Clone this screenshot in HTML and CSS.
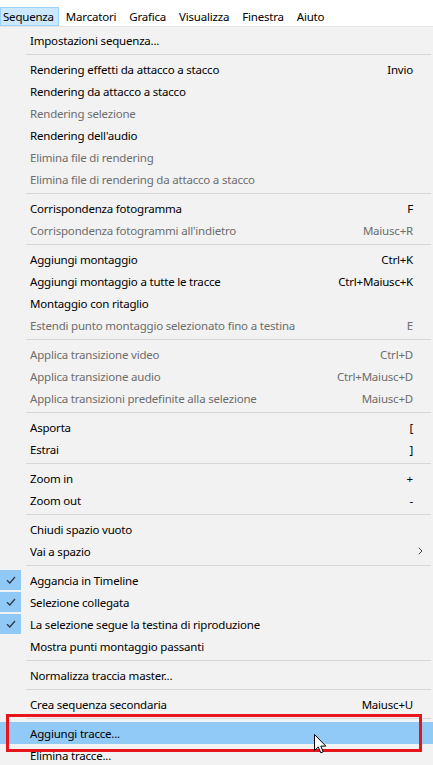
FILE: index.html
```html
<!DOCTYPE html>
<html lang="it">
<head>
<meta charset="utf-8">
<title>Menu Sequenza</title>
<link rel="stylesheet" href="styles.css">
</head>
<body>
<div class="titlebar"></div>
<nav class="menubar">
  <span class="mb-item active">Sequenza</span>
  <span class="mb-item">Marcatori</span>
  <span class="mb-item">Grafica</span>
  <span class="mb-item">Visualizza</span>
  <span class="mb-item">Finestra</span>
  <span class="mb-item">Aiuto</span>
</nav>
<div class="dropdown">
  <div class="item"><span class="gut"></span><span class="label">Impostazioni sequenza...</span><span class="key"></span><span class="sub"></span></div>
  <div class="sep"></div>
  <div class="item"><span class="gut"></span><span class="label">Rendering effetti da attacco a stacco</span><span class="key">Invio</span><span class="sub"></span></div>
  <div class="item"><span class="gut"></span><span class="label">Rendering da attacco a stacco</span><span class="key"></span><span class="sub"></span></div>
  <div class="item dis"><span class="gut"></span><span class="label">Rendering selezione</span><span class="key"></span><span class="sub"></span></div>
  <div class="item"><span class="gut"></span><span class="label">Rendering dell'audio</span><span class="key"></span><span class="sub"></span></div>
  <div class="item dis"><span class="gut"></span><span class="label">Elimina file di rendering</span><span class="key"></span><span class="sub"></span></div>
  <div class="item dis"><span class="gut"></span><span class="label">Elimina file di rendering da attacco a stacco</span><span class="key"></span><span class="sub"></span></div>
  <div class="sep"></div>
  <div class="item"><span class="gut"></span><span class="label">Corrispondenza fotogramma</span><span class="key">F</span><span class="sub"></span></div>
  <div class="item dis"><span class="gut"></span><span class="label">Corrispondenza fotogrammi all'indietro</span><span class="key">Maiusc+R</span><span class="sub"></span></div>
  <div class="sep"></div>
  <div class="item"><span class="gut"></span><span class="label">Aggiungi montaggio</span><span class="key">Ctrl+K</span><span class="sub"></span></div>
  <div class="item"><span class="gut"></span><span class="label">Aggiungi montaggio a tutte le tracce</span><span class="key">Ctrl+Maiusc+K</span><span class="sub"></span></div>
  <div class="item"><span class="gut"></span><span class="label">Montaggio con ritaglio</span><span class="key"></span><span class="sub"></span></div>
  <div class="item dis"><span class="gut"></span><span class="label">Estendi punto montaggio selezionato fino a testina</span><span class="key">E</span><span class="sub"></span></div>
  <div class="sep"></div>
  <div class="item dis"><span class="gut"></span><span class="label">Applica transizione video</span><span class="key">Ctrl+D</span><span class="sub"></span></div>
  <div class="item dis"><span class="gut"></span><span class="label">Applica transizione audio</span><span class="key">Ctrl+Maiusc+D</span><span class="sub"></span></div>
  <div class="item dis"><span class="gut"></span><span class="label">Applica transizioni predefinite alla selezione</span><span class="key">Maiusc+D</span><span class="sub"></span></div>
  <div class="sep"></div>
  <div class="item"><span class="gut"></span><span class="label">Asporta</span><span class="key">[</span><span class="sub"></span></div>
  <div class="item"><span class="gut"></span><span class="label">Estrai</span><span class="key">]</span><span class="sub"></span></div>
  <div class="sep"></div>
  <div class="item"><span class="gut"></span><span class="label">Zoom in</span><span class="key">+</span><span class="sub"></span></div>
  <div class="item"><span class="gut"></span><span class="label">Zoom out</span><span class="key">-</span><span class="sub"></span></div>
  <div class="sep"></div>
  <div class="item"><span class="gut"></span><span class="label">Chiudi spazio vuoto</span><span class="key"></span><span class="sub"></span></div>
  <div class="item"><span class="gut"></span><span class="label">Vai a spazio</span><span class="key"></span><span class="sub"><svg width="5" height="8" viewBox="0 0 5 8"><path d="M0.8 0.8 L4 4 L0.8 7.2" fill="none" stroke="#444" stroke-width="1"/></svg></span></div>
  <div class="sep"></div>
  <div class="item"><span class="gut checked"><svg class="check" width="10" height="8" viewBox="0 0 10 8"><path d="M1 4.2 L3.8 7 L9 1" fill="none" stroke="#2b3a4a" stroke-width="1.3"/></svg></span><span class="label">Aggancia in Timeline</span><span class="key"></span><span class="sub"></span></div>
  <div class="item"><span class="gut checked"><svg class="check" width="10" height="8" viewBox="0 0 10 8"><path d="M1 4.2 L3.8 7 L9 1" fill="none" stroke="#2b3a4a" stroke-width="1.3"/></svg></span><span class="label">Selezione collegata</span><span class="key"></span><span class="sub"></span></div>
  <div class="item"><span class="gut checked"><svg class="check" width="10" height="8" viewBox="0 0 10 8"><path d="M1 4.2 L3.8 7 L9 1" fill="none" stroke="#2b3a4a" stroke-width="1.3"/></svg></span><span class="label">La selezione segue la testina di riproduzione</span><span class="key"></span><span class="sub"></span></div>
  <div class="item"><span class="gut"></span><span class="label">Mostra punti montaggio passanti</span><span class="key"></span><span class="sub"></span></div>
  <div class="sep"></div>
  <div class="item"><span class="gut"></span><span class="label">Normalizza traccia master...</span><span class="key"></span><span class="sub"></span></div>
  <div class="sep"></div>
  <div class="item"><span class="gut"></span><span class="label">Crea sequenza secondaria</span><span class="key">Maiusc+U</span><span class="sub"></span></div>
  <div class="sep"></div>
  <div class="item hover"><span class="gut"></span><span class="label">Aggiungi tracce...</span><span class="key"></span><span class="sub"></span></div>
  <div class="item"><span class="gut"></span><span class="label">Elimina tracce...</span><span class="key"></span><span class="sub"></span></div>
</div>
<div class="annotation"></div>
<svg class="cursor" width="13" height="21" viewBox="0 0 13 21"><path d="M0.5 0.5 L0.5 16.5 L4.3 12.9 L6.8 18.8 L9.2 17.8 L6.8 12.1 L11.8 12.1 Z" fill="#fff" stroke="#000" stroke-width="1" stroke-linejoin="round"/></svg>
</body>
</html>
```
FILE: styles.css
```css
html, body {
  margin: 0;
  padding: 0;
}
body {
  width: 433px;
  height: 765px;
  overflow: hidden;
  position: relative;
  background: #f2f2f2;
  font-family: "Noto Sans", "Open Sans", sans-serif;
  font-size: 11.5px;
  letter-spacing: -0.2px;
  color: #000;
}
.titlebar {
  height: 7px;
  background: #fff;
}
.menubar {
  display: flex;
  height: 19px;
  background: #fff;
  border-bottom: 1px solid #e3e3e3;
}
.mb-item {
  display: flex;
  align-items: center;
  padding: 0 6px 0 7px;
  height: 19px;
  box-sizing: border-box;
  line-height: 1;
}
.mb-item.active {
  background: #cce8ff;
  border: 1px solid #99d1ff;
  padding: 0 4px 0 2px;
}
.dropdown {
  padding-top: 2px;
}
.item {
  display: grid;
  grid-template-columns: 30px 1fr auto 20px;
  align-items: center;
  height: 22px;
  white-space: nowrap;
}
.item.dis {
  color: #6d6d6d;
}
.item.hover {
  background: #91c9f7;
}
.gut {
  height: 22px;
  display: flex;
  align-items: center;
}
.gut.checked {
  width: 21px;
  height: 20px;
  background: #90c8f6;
  justify-content: center;
}
.label {
  overflow: hidden;
}
.key {
  text-align: right;
}
.sub {
  display: flex;
  align-items: center;
  padding-left: 5px;
}
.sep {
  height: 1px;
  margin: 3px 2px 3px 26px;
  background: #d7d7d7;
}
.annotation {
  position: absolute;
  left: 6px;
  top: 714px;
  width: 410px;
  height: 32px;
  border: 3px solid #e8141c;
}
.cursor {
  position: absolute;
  left: 314px;
  top: 734px;
}
```
